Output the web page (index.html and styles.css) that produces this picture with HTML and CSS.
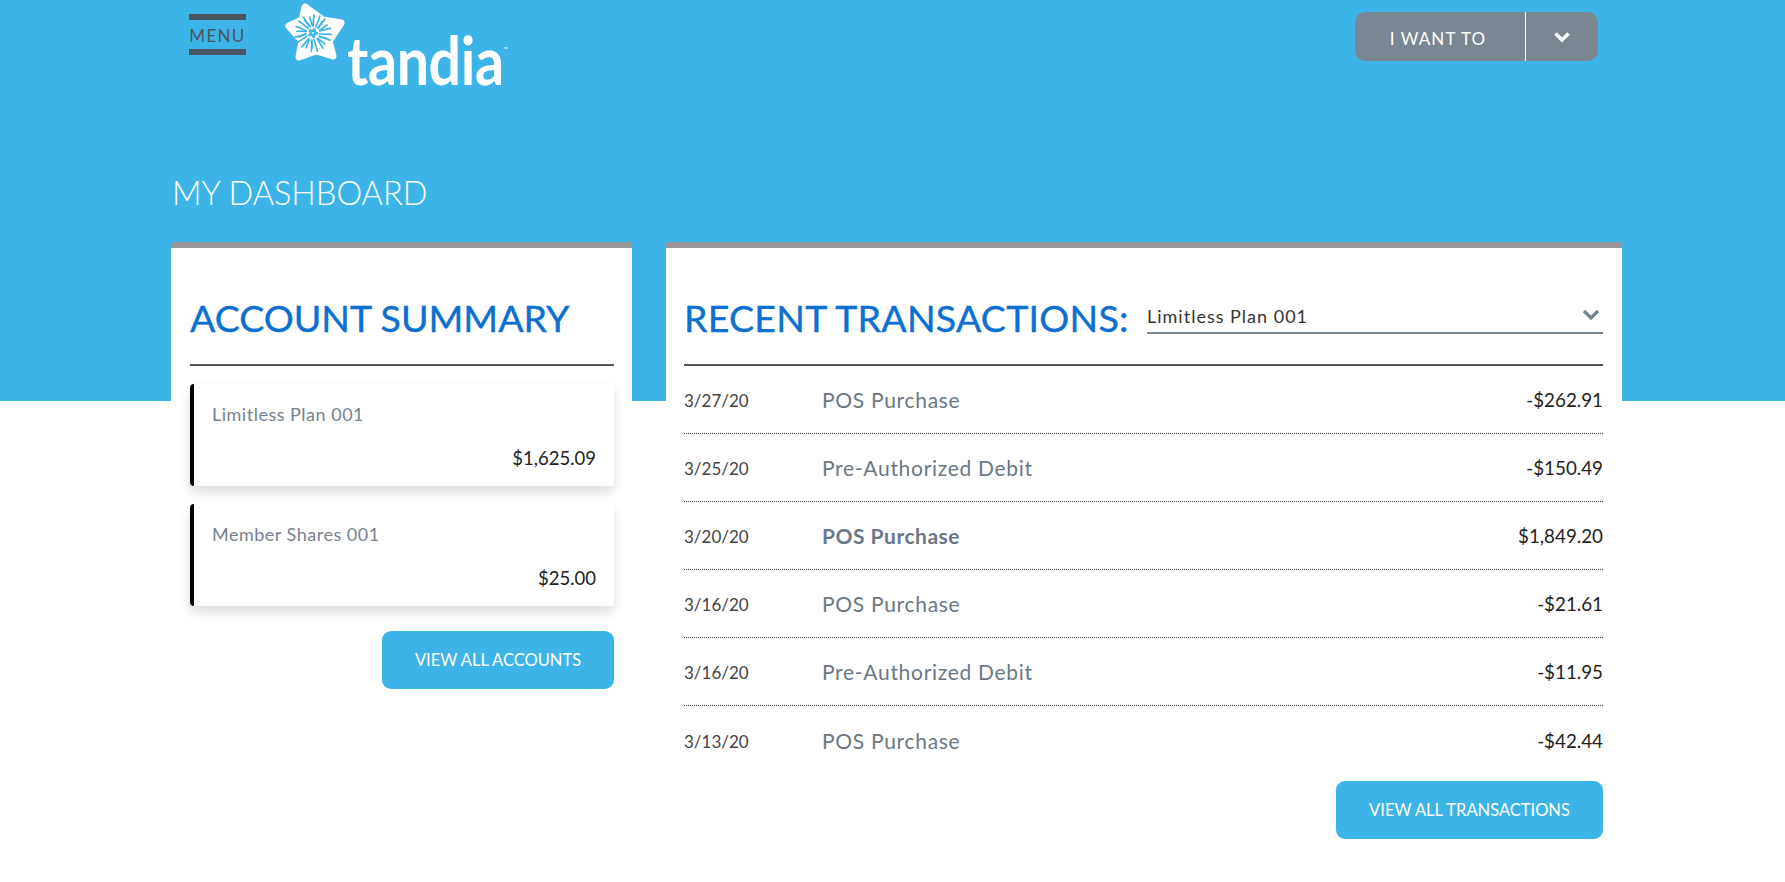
FILE: index.html
```html
<!DOCTYPE html>
<html lang="en">
<head>
  <meta charset="UTF-8">
  <title>My Dashboard</title>
  <link rel="stylesheet" href="styles.css">
</head>
<body>

  <div class="page">
    <!-- Top bar -->
    <div class="topbar">
      <div class="menu">MENU</div>
      <div class="logo">
        <svg class="star" width="66" height="64" viewBox="0 0 66 64">
          <polygon class="star-body" points="22,5 40,18 58,21 46,39 50,54 33,49 16,55 19,39 6,24 19,18"/>
          <g class="hands">
            <g id="hand">
              <path d="M30 24 L31 13 M33 25 L37 14 M35 26 L42 17 M37 28 L44 23 M27 24 L22 19 M26 33 L31 27"/>
            </g>
            <use href="#hand" transform="rotate(72 30 31)"/>
            <use href="#hand" transform="rotate(144 30 31)"/>
            <use href="#hand" transform="rotate(216 30 31)"/>
            <use href="#hand" transform="rotate(288 30 31)"/>
          </g>
        </svg>
        <span class="wordmark">tandia<sup>™</sup></span>
      </div>
      <div class="want">
        <span class="want-label">I WANT TO</span>
        <span class="want-arrow">
          <svg width="16" height="11" viewBox="0 0 16 11"><path d="M1.5 1.5 L8 8 L14.5 1.5" fill="none" stroke="#fff" stroke-width="3.6"/></svg>
        </span>
      </div>
    </div>

    <h1>MY DASHBOARD</h1>

    <div class="cards">
      <!-- Account summary -->
      <div class="card card-accounts">
        <div class="card-head">
          <h2>ACCOUNT SUMMARY</h2>
        </div>
        <div class="account">
          <div class="account-name">Limitless Plan 001</div>
          <div class="account-amount">$1,625.09</div>
        </div>
        <div class="account">
          <div class="account-name">Member Shares 001</div>
          <div class="account-amount">$25.00</div>
        </div>
        <div class="actions accounts-action">
          <a class="btn btn-accounts">VIEW ALL ACCOUNTS</a>
        </div>
      </div>

      <!-- Recent transactions -->
      <div class="card">
        <div class="card-head">
          <h2 class="title-wide">RECENT TRANSACTIONS:</h2>
          <div class="select">
            <span class="select-text">Limitless Plan 001</span>
            <svg width="18" height="12" viewBox="0 0 18 12"><path d="M2 2 L9 9 L16 2" fill="none" stroke="#71828f" stroke-width="3.2"/></svg>
          </div>
        </div>
        <div class="row"><span class="date">3/27/20</span><span class="desc">POS Purchase</span><span class="amount">-$262.91</span></div>
        <div class="row"><span class="date">3/25/20</span><span class="desc">Pre-Authorized Debit</span><span class="amount">-$150.49</span></div>
        <div class="row"><span class="date">3/20/20</span><span class="desc pending">POS Purchase</span><span class="amount">$1,849.20</span></div>
        <div class="row"><span class="date">3/16/20</span><span class="desc">POS Purchase</span><span class="amount">-$21.61</span></div>
        <div class="row"><span class="date">3/16/20</span><span class="desc">Pre-Authorized Debit</span><span class="amount">-$11.95</span></div>
        <div class="row row-last"><span class="date">3/13/20</span><span class="desc">POS Purchase</span><span class="amount">-$42.44</span></div>
        <div class="actions">
          <a class="btn btn-transactions">VIEW ALL TRANSACTIONS</a>
        </div>
      </div>
    </div>
  </div>

</body>
</html>
```

FILE: styles.css
```css
* {
  box-sizing: border-box;
}

body {
  margin: 0;
  font-family: Lato, "Open Sans", sans-serif;
  background: #fff;
}

.page {
  height: 882px;
  overflow: hidden;
  padding-left: 171px;
  background: linear-gradient(#3db4e8 401px, #fff 401px);
}

.topbar {
  display: flex;
  width: 1451px;
  height: 90px;
}

.menu {
  width: 57px;
  height: 41px;
  margin: 14px 0 0 18px;
  border-top: 6px solid #4a5561;
  border-bottom: 6px solid #4a5561;
  color: #4a5561;
  font-size: 17px;
  line-height: 31px;
  letter-spacing: 1.3px;
  text-align: center;
}

.logo {
  display: flex;
  margin: 2px 0 0 37px;
}

.star-body {
  fill: #fff;
  stroke: #fff;
  stroke-width: 7;
  stroke-linejoin: round;
}

.hands path {
  fill: none;
  stroke: #3db4e8;
  stroke-width: 1.7;
  stroke-linecap: round;
}

.wordmark {
  height: 70px;
  margin: 23px 0 0 -2px;
  color: #fff;
  font-size: 66px;
  line-height: 70px;
  font-weight: 700;
  letter-spacing: -0.5px;
  transform: scaleX(0.87);
  transform-origin: left;
}

.wordmark sup {
  font-size: 7px;
  line-height: 0;
  vertical-align: 33px;
  font-weight: 400;
}

.want {
  display: flex;
  width: 243px;
  height: 49px;
  margin: 12px 24px 0 auto;
  border-radius: 10px;
  background: #7a8793;
  color: #fff;
}

.want-label {
  width: 171px;
  padding: 2px 4px 0 0;
  border-right: 1px solid #fff;
  font-size: 17px;
  line-height: 49px;
  letter-spacing: 1.1px;
  text-align: center;
}

.want-arrow {
  display: flex;
  flex: 1;
  align-items: center;
  justify-content: center;
  padding-top: 1px;
}

h1 {
  height: 152px;
  margin: 0;
  padding: 83px 0 0 1px;
  color: #fff;
  font-size: 32.5px;
  line-height: 40px;
  font-weight: 300;
}

.cards {
  display: grid;
  grid-template-columns: 461px 956px;
  gap: 34px;
  width: 1451px;
}

.card {
  height: 620px;
  padding: 0 19px 0 18px;
  background: #fff;
  border-top: 6px solid #999;
}

.card-accounts {
  padding: 0 18px 0 19px;
}

.card-head {
  display: flex;
  align-items: flex-start;
  height: 118px;
  border-bottom: 2px solid #555;
}

h2 {
  margin: 45px 0 0;
  color: #0b70cf;
  font-size: 37.5px;
  line-height: 50px;
  font-weight: 400;
  -webkit-text-stroke: 0.4px #0b70cf;
  white-space: nowrap;
}

.title-wide {
  letter-spacing: 0.25px;
}

.select {
  display: flex;
  align-items: center;
  justify-content: space-between;
  width: 456px;
  height: 41px;
  margin: 45px 0 0 auto;
  padding: 4px 3px 0 0;
  border-bottom: 2px solid #7b8894;
  color: #333;
  font-size: 18px;
  letter-spacing: 1px;
}

.select-text {
  padding-top: 3px;
}

.account {
  height: 102px;
  margin-top: 18px;
  padding: 19px 18px 0 18px;
  border-left: 4px solid #000;
  border-radius: 4px 0 0 4px;
  background: #fff;
  box-shadow: 0 6px 12px rgba(0, 0, 0, 0.14);
}

.account-name {
  color: #76828f;
  font-size: 18px;
  line-height: 22px;
  letter-spacing: 0.5px;
}

.account-amount {
  margin-top: 22px;
  color: #222;
  font-size: 18.5px;
  line-height: 22px;
  text-align: right;
}

.row {
  display: flex;
  align-items: center;
  height: 68px;
  border-bottom: 1px dotted #444;
}

.row-last {
  border-bottom: 0;
}

.date {
  width: 138px;
  padding-top: 2px;
  color: #444;
  font-size: 17px;
}

.desc {
  flex: 1;
  color: #6b7785;
  font-size: 21px;
  letter-spacing: 0.7px;
}

.pending {
  font-weight: 700;
  letter-spacing: 0.5px;
}

.amount {
  color: #222;
  font-size: 18.8px;
}

.actions {
  display: flex;
  justify-content: flex-end;
  margin-top: 7px;
}

.accounts-action {
  margin-top: 25px;
}

.btn {
  height: 58px;
  border-radius: 9px;
  background: #3db4e8;
  color: #fff;
  font-size: 16.5px;
  line-height: 58px;
  text-align: center;
}

.btn-accounts {
  width: 232px;
}

.btn-transactions {
  width: 267px;
}
```
